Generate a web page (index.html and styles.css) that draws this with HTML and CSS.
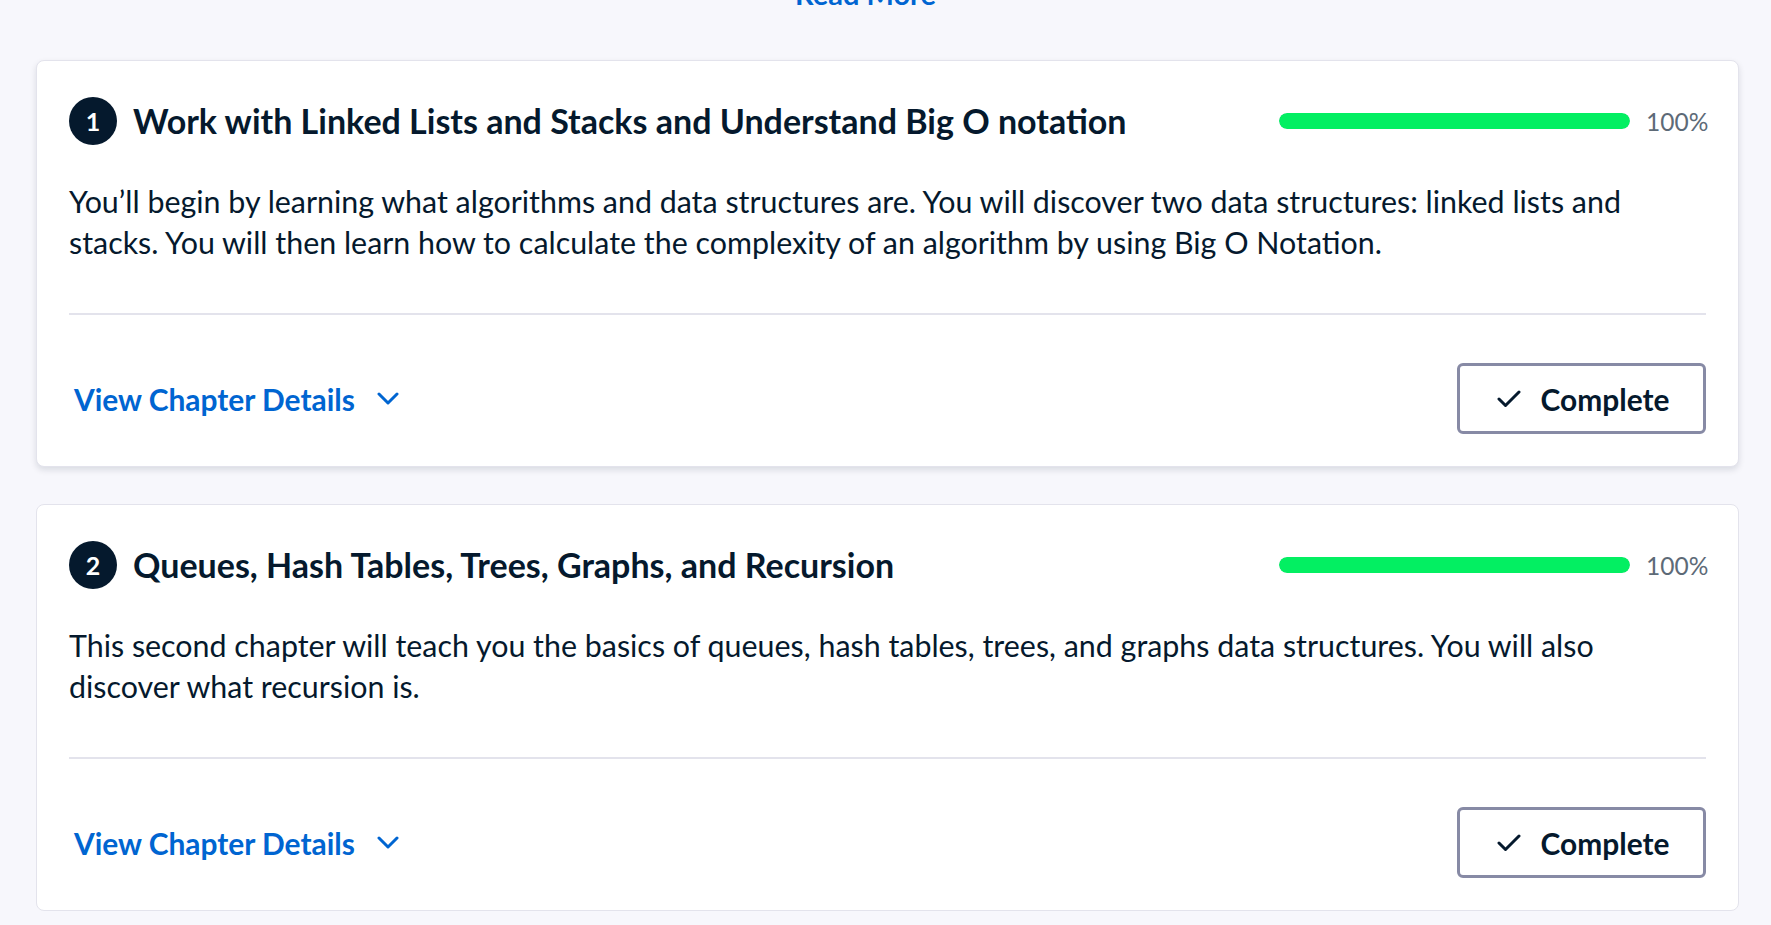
FILE: index.html
```html
<!DOCTYPE html>
<html lang="en">
<head>
<meta charset="utf-8">
<title>Chapters</title>
<link rel="stylesheet" href="styles.css">
</head>
<body>
<main class="page">
  <div class="intro">
    <a class="readmore" href="#">Read More
      <svg class="chev" width="22" height="13" viewBox="0 0 22 13"><polyline points="2,2 11,11 20,2" fill="none" stroke="currentColor" stroke-width="3" stroke-linecap="round" stroke-linejoin="round"/></svg>
    </a>
  </div>

  <section class="chapter chapter-hover">
    <header class="chapter-head">
      <span class="num">1</span>
      <h3 class="title">Work with Linked Lists and Stacks and Understand Big O notation</h3>
      <div class="progress">
        <div class="bar"><div class="fill" style="width:100%"></div></div>
        <span class="pct">100%</span>
      </div>
    </header>
    <p class="desc">You’ll begin by learning what algorithms and data structures are. You will discover two data structures: linked lists and stacks. You will then learn how to calculate the complexity of an algorithm by using Big O Notation.</p>
    <hr class="divider">
    <footer class="chapter-foot">
      <a class="details" href="#">View Chapter Details
        <svg class="chev" width="22" height="13" viewBox="0 0 22 13"><polyline points="2,2 11,11 20,2" fill="none" stroke="currentColor" stroke-width="3" stroke-linecap="round" stroke-linejoin="round"/></svg>
      </a>
      <button class="complete" type="button">
        <svg width="24" height="18" viewBox="0 0 24 18"><polyline points="2,9 8.5,15.5 22,2" fill="none" stroke="currentColor" stroke-width="3" stroke-linecap="round" stroke-linejoin="round"/></svg>
        <span>Complete</span>
      </button>
    </footer>
  </section>

  <section class="chapter">
    <header class="chapter-head">
      <span class="num">2</span>
      <h3 class="title">Queues, Hash Tables, Trees, Graphs, and Recursion</h3>
      <div class="progress">
        <div class="bar"><div class="fill" style="width:100%"></div></div>
        <span class="pct">100%</span>
      </div>
    </header>
    <p class="desc">This second chapter will teach you the basics of queues, hash tables, trees, and graphs data structures. You will also discover what recursion is.</p>
    <hr class="divider">
    <footer class="chapter-foot">
      <a class="details" href="#">View Chapter Details
        <svg class="chev" width="22" height="13" viewBox="0 0 22 13"><polyline points="2,2 11,11 20,2" fill="none" stroke="currentColor" stroke-width="3" stroke-linecap="round" stroke-linejoin="round"/></svg>
      </a>
      <button class="complete" type="button">
        <svg width="24" height="18" viewBox="0 0 24 18"><polyline points="2,9 8.5,15.5 22,2" fill="none" stroke="currentColor" stroke-width="3" stroke-linecap="round" stroke-linejoin="round"/></svg>
        <span>Complete</span>
      </button>
    </footer>
  </section>
</main>
</body>
</html>
```

FILE: styles.css
```css
* { box-sizing: border-box; }

html, body {
  margin: 0;
  background: #f7f7fc;
}

body {
  font-family: Lato, "Noto Sans", sans-serif;
  color: #05192d;
  overflow: hidden;
}

.page {
  padding: 0 32px 0 36px;
}

.intro {
  height: 60px;
  display: flex;
  justify-content: center;
}

.readmore {
  margin-top: -27px;
  height: 41px;
  display: flex;
  align-items: center;
  gap: 22px;
  color: #0065d1;
  font-size: 29px;
  font-weight: 700;
  line-height: 41px;
  text-decoration: none;
}

.chapter {
  background: #ffffff;
  border: 1px solid #e3e3ec;
  border-radius: 8px;
  padding: 36px 32px 32px;
  margin-bottom: 37px;
}

.chapter-hover {
  box-shadow: 0 3px 6px rgba(5, 25, 45, 0.12);
}

.chapter-head {
  height: 48px;
  display: flex;
  align-items: center;
}

.num {
  flex: none;
  width: 48px;
  height: 48px;
  border-radius: 50%;
  background: #05192d;
  color: #ffffff;
  display: flex;
  align-items: center;
  justify-content: center;
  font-size: 25px;
  font-weight: 700;
}

.title {
  margin: 0 0 0 16px;
  flex: 1;
  font-size: 34px;
  font-weight: 700;
  line-height: 40px;
  white-space: nowrap;
}

.progress {
  flex: none;
  display: flex;
  align-items: center;
  gap: 16px;
}

.bar {
  width: 351px;
  height: 16px;
  border-radius: 8px;
  background: #e5e5ee;
  overflow: hidden;
}

.fill {
  height: 100%;
  background: #03ef62;
  border-radius: 8px;
}

.pct {
  font-size: 24.5px;
  color: #5d6a77;
  width: 60px;
}

.desc {
  margin: 36px 0 0;
  font-size: 30.4px;
  line-height: 41px;
}

.divider {
  margin: 50px 0 0;
  border: 0;
  height: 2px;
  background: #e3e3ec;
}

.chapter-foot {
  margin-top: 48px;
  display: flex;
  align-items: center;
  justify-content: space-between;
}

.details {
  margin-left: 5px;
  display: flex;
  align-items: center;
  gap: 22px;
  color: #0065d1;
  font-size: 29.9px;
  font-weight: 700;
  text-decoration: none;
}

.complete {
  width: 249px;
  height: 71px;
  border: 3px solid #878aa5;
  border-radius: 6px;
  background: #ffffff;
  color: #05192d;
  display: flex;
  align-items: center;
  justify-content: center;
  gap: 20px;
  font-family: inherit;
  font-size: 29.9px;
  font-weight: 700;
  padding: 0 0 0 3px;
}

.complete svg { flex: none; }
```
